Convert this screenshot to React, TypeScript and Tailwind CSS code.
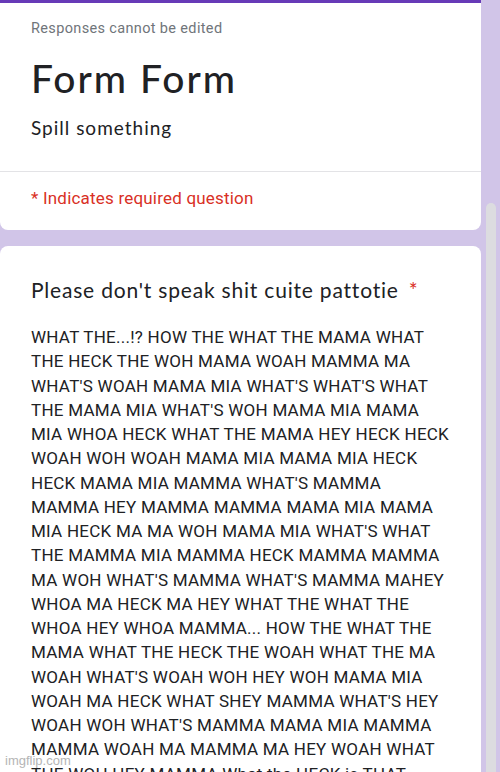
const ANSWER_LINES = [
  "WHAT THE...!? HOW THE WHAT THE MAMA WHAT",
  "THE HECK THE WOH MAMA WOAH MAMMA MA",
  "WHAT'S WOAH MAMA MIA WHAT'S WHAT'S WHAT",
  "THE MAMA MIA WHAT'S WOH MAMA MIA MAMA",
  "MIA WHOA HECK WHAT THE MAMA HEY HECK HECK",
  "WOAH WOH WOAH MAMA MIA MAMA MIA HECK",
  "HECK MAMA MIA MAMMA WHAT'S MAMMA",
  "MAMMA HEY MAMMA MAMMA MAMA MIA MAMA",
  "MIA HECK MA MA WOH MAMA MIA WHAT'S WHAT",
  "THE MAMMA MIA MAMMA HECK MAMMA MAMMA",
  "MA WOH WHAT'S MAMMA WHAT'S MAMMA MAHEY",
  "WHOA MA HECK MA HEY WHAT THE WHAT THE",
  "WHOA HEY WHOA MAMMA... HOW THE WHAT THE",
  "MAMA WHAT THE HECK THE WOAH WHAT THE MA",
  "WOAH WHAT'S WOAH WOH HEY WOH MAMA MIA",
  "WOAH MA HECK WHAT SHEY MAMMA WHAT'S HEY",
  "WOAH WOH WHAT'S MAMMA MAMA MIA MAMMA",
  "MAMMA WOAH MA MAMMA MA HEY WOAH WHAT",
  "THE WOH HEY MAMMA What the HECK is THAT...",
];

const roboto = { fontFamily: "Roboto, 'Liberation Sans', sans-serif" };
const display = { fontFamily: "Lato, 'Open Sans', sans-serif" };

const App = () => {
  return (
    <div className="relative flex h-[772px] w-[500px] overflow-hidden bg-[#d1c5e8]">
      <div className="flex w-[481px] flex-col gap-4">
        {/* header card */}
        <div className="rounded-b-lg border-t-[3px] border-[#673ab7] bg-white">
          <div className="px-[31px] pb-[29px] pt-4">
            <div className="text-[14.5px] leading-5 tracking-[0.35px] text-[#70757a]" style={roboto}>
              Responses cannot be edited
            </div>
            <div className="mt-[15px] text-[39px] font-medium leading-[48px] tracking-[2px] text-[#202124]" style={display}>
              Form Form
            </div>
            <div className="mt-[12px] text-[19px] leading-7 tracking-[1px] text-[#202124]" style={display}>
              Spill something
            </div>
          </div>
          <div className="h-px bg-[#e3e3e6]" />
          <div className="px-[31px] pb-5 pt-[14px] text-[17px] leading-6 tracking-[0.2px] text-[#d93025]" style={roboto}>
            * Indicates required question
          </div>
        </div>

        {/* question card */}
        <div className="flex-1 rounded-t-lg bg-white px-[31px] pt-[30px]">
          <div className="flex items-center text-[21px] leading-7 tracking-[0.8px] text-[#202124]" style={display}>
            <span>Please don't speak shit cuite pattotie</span>
            <span className="ml-[10px] text-[#d93025]">*</span>
          </div>
          <div className="mt-[21px] text-[17px] leading-[24.25px] tracking-[0.25px] text-[#202124]" style={roboto}>
            {ANSWER_LINES.map((line, i) => (
              <div key={i} className="whitespace-nowrap">
                {line}
              </div>
            ))}
          </div>
        </div>
      </div>

      {/* scrollbar */}
      <div className="flex flex-1 justify-center pt-[203px]">
        <div className="w-[10px] rounded-t-full bg-[#dcdce0]" />
      </div>

      <div
        className="absolute bottom-[3px] left-[5px] text-[13px] leading-4 text-[#b5b5b5]"
        style={{ fontFamily: "'Liberation Sans', Arial, sans-serif" }}
      >
        imgflip.com
      </div>
    </div>
  );
};

export default App;
